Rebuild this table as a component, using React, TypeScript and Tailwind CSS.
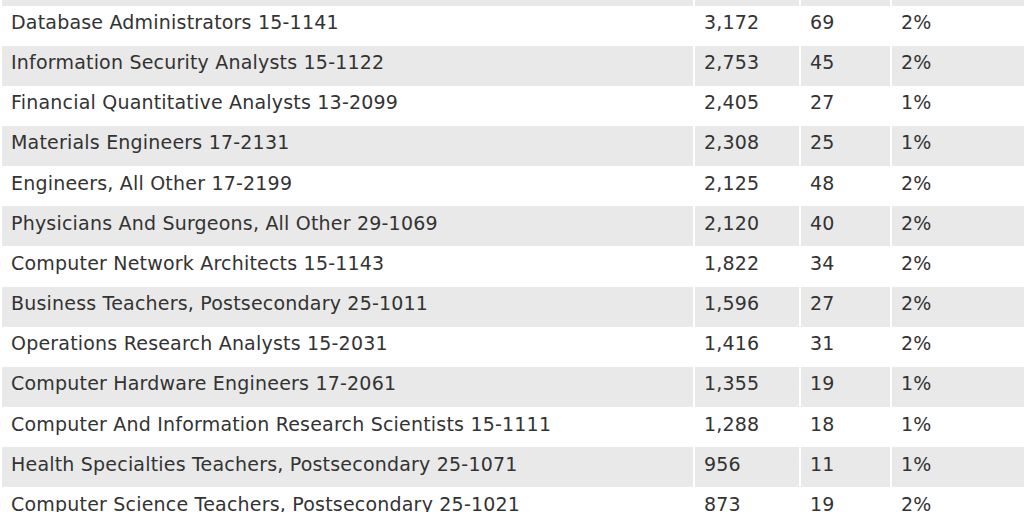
const rows: [string, string, string, string][] = [
  ["", "", "", ""],
  ["Database Administrators 15-1141", "3,172", "69", "2%"],
  ["Information Security Analysts 15-1122", "2,753", "45", "2%"],
  ["Financial Quantitative Analysts 13-2099", "2,405", "27", "1%"],
  ["Materials Engineers 17-2131", "2,308", "25", "1%"],
  ["Engineers, All Other 17-2199", "2,125", "48", "2%"],
  ["Physicians And Surgeons, All Other 29-1069", "2,120", "40", "2%"],
  ["Computer Network Architects 15-1143", "1,822", "34", "2%"],
  ["Business Teachers, Postsecondary 25-1011", "1,596", "27", "2%"],
  ["Operations Research Analysts 15-2031", "1,416", "31", "2%"],
  ["Computer Hardware Engineers 17-2061", "1,355", "19", "1%"],
  ["Computer And Information Research Scientists 15-1111", "1,288", "18", "1%"],
  ["Health Specialties Teachers, Postsecondary 25-1071", "956", "11", "1%"],
  ["Computer Science Teachers, Postsecondary 25-1021", "873", "19", "2%"],
];

export default function App() {
  return (
    <div className="h-[512px] w-[1024px] overflow-hidden bg-white">
      <div
        className="-mt-[34.67px] pl-[2px] text-[19px] leading-[22px] tracking-[0.2px] text-[#333333]"
        style={{ fontFamily: '"DejaVu Sans", sans-serif' }}
      >
        {rows.map((r, i) => {
          const bg = i % 2 === 0 ? "bg-[#e9e9e9]" : "bg-white";
          return (
            <div key={i} className="flex h-[40.17px] gap-[2px]">
              <div className={`w-[691px] shrink-0 pl-[9px] pt-[5.5px] whitespace-nowrap ${bg}`}>{r[0]}</div>
              <div className={`w-[104px] shrink-0 pl-[9px] pt-[5.5px] ${bg}`}>{r[1]}</div>
              <div className={`w-[89px] shrink-0 pl-[9px] pt-[5.5px] ${bg}`}>{r[2]}</div>
              <div className={`w-[140px] shrink-0 pl-[9px] pt-[5.5px] ${bg}`}>{r[3]}</div>
            </div>
          );
        })}
      </div>
    </div>
  );
}
